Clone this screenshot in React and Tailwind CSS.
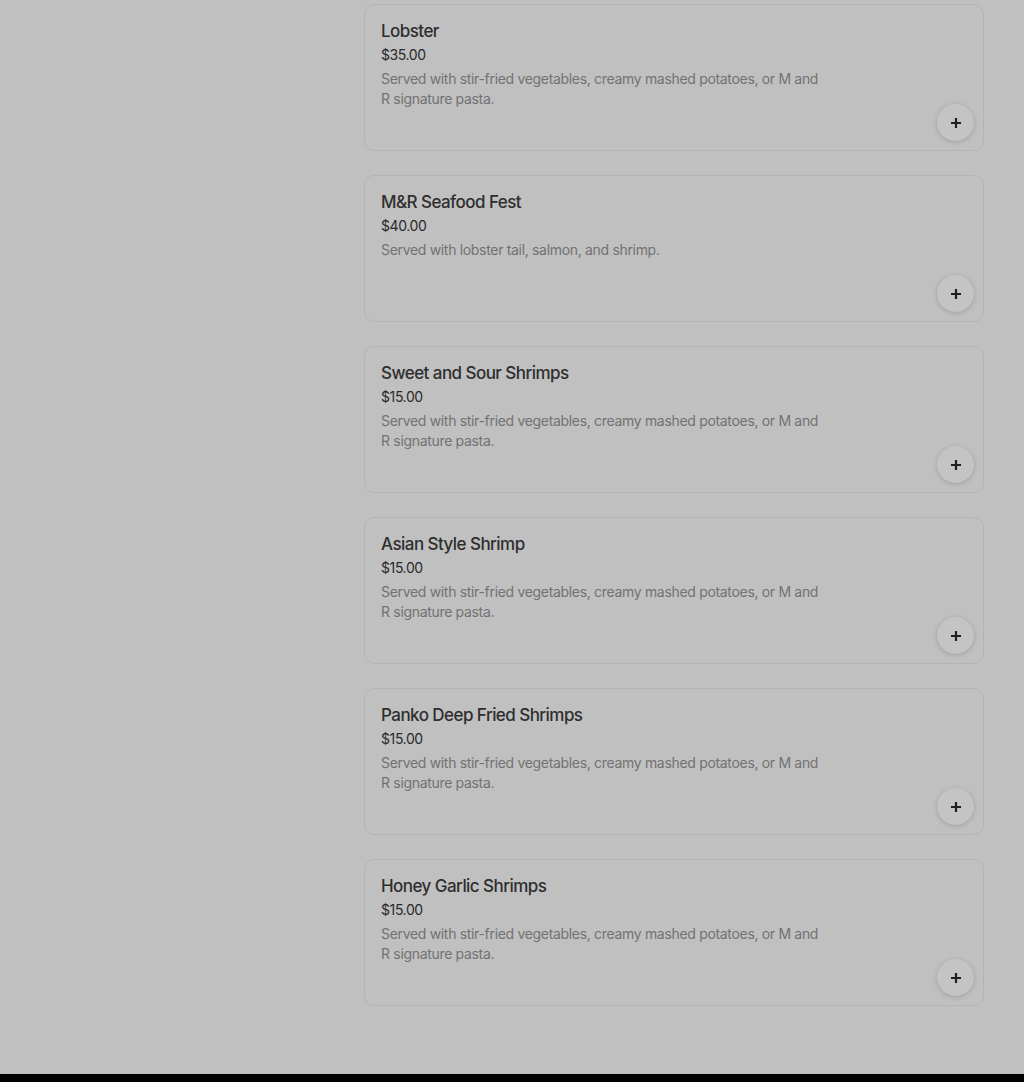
import React from 'react';

const items = [
  { name: 'Lobster', price: '$35.00', desc: 'Served with stir-fried vegetables, creamy mashed potatoes, or M and R signature pasta.' },
  { name: 'M&R Seafood Fest', price: '$40.00', desc: 'Served with lobster tail, salmon, and shrimp.' },
  { name: 'Sweet and Sour Shrimps', price: '$15.00', desc: 'Served with stir-fried vegetables, creamy mashed potatoes, or M and R signature pasta.' },
  { name: 'Asian Style Shrimp', price: '$15.00', desc: 'Served with stir-fried vegetables, creamy mashed potatoes, or M and R signature pasta.' },
  { name: 'Panko Deep Fried Shrimps', price: '$15.00', desc: 'Served with stir-fried vegetables, creamy mashed potatoes, or M and R signature pasta.' },
  { name: 'Honey Garlic Shrimps', price: '$15.00', desc: 'Served with stir-fried vegetables, creamy mashed potatoes, or M and R signature pasta.' },
];

const ItemCard = ({ item }) => (
  <div className="relative h-[147px] rounded-[10px] border border-[#b4b4b4] bg-[#c0c0c0] px-4 pt-[14px]">
    <h3 className="text-[17px] leading-[24px] font-medium text-[#2e2e2e] tracking-[-0.55px]">{item.name}</h3>
    <p className="mt-[2px] text-[14px] leading-[20px] text-[#2a2a2a] tracking-[-0.4px]">{item.price}</p>
    <p className="mt-[4px] max-w-[445px] text-[14px] leading-[20px] text-[#727272] tracking-[-0.32px]">{item.desc}</p>
    <button className="absolute right-[9px] bottom-[9px] w-[37px] h-[37px] rounded-full bg-[#c4c4c4] shadow-[0_1px_5px_rgba(0,0,0,0.18)] flex items-center justify-center">
      <svg width="12" height="12" viewBox="0 0 12 12">
        <path d="M6 1v10M1 6h10" stroke="#1f1f1f" strokeWidth="2.2" />
      </svg>
    </button>
  </div>
);

export default function App() {
  return (
    <div className="min-h-[1082px] bg-[#c0c0c0] flex flex-col" style={{ fontFamily: 'Inter, "Noto Sans", sans-serif' }}>
      <div className="flex-1 pl-[364px] pr-[40px] pt-[4px]">
        <div className="flex flex-col gap-[24px]">
          {items.map((it) => (
            <ItemCard key={it.name} item={it} />
          ))}
        </div>
      </div>
      <div className="h-[8px] bg-black" />
    </div>
  );
}
